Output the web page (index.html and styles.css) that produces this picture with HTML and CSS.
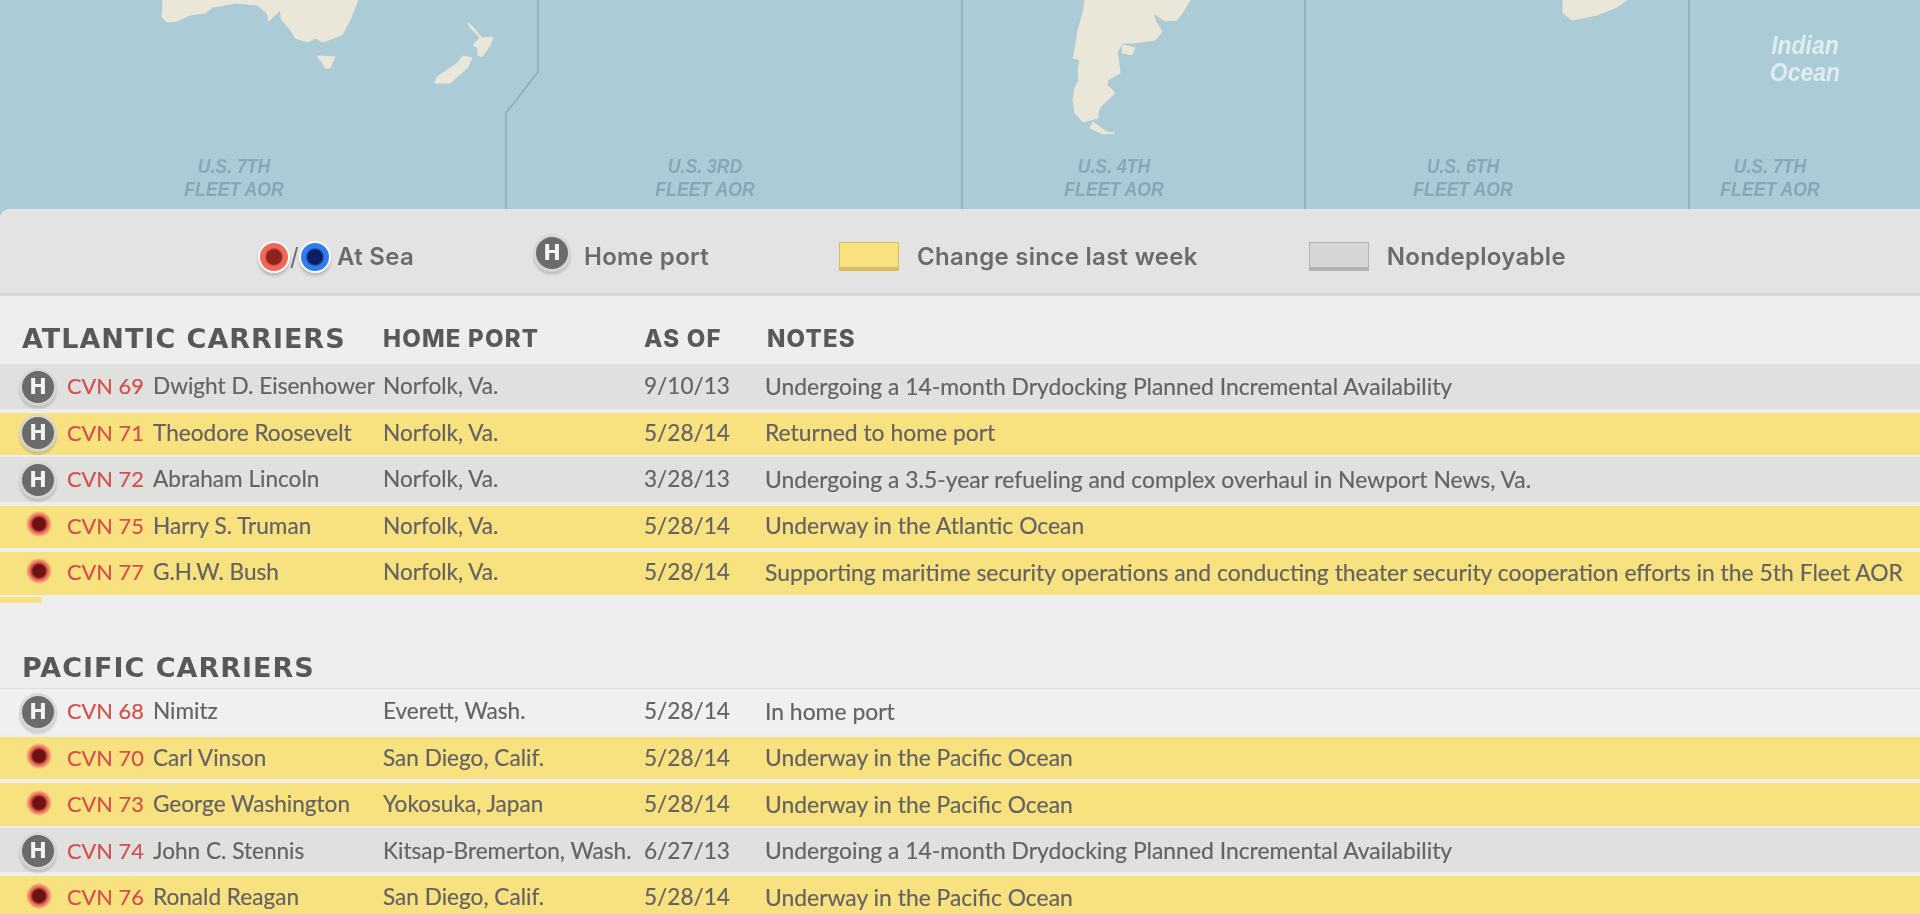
FILE: index.html
```html
<!DOCTYPE html>
<html lang="en">
<head>
    <meta charset="UTF-8">
    <meta name="viewport" content="width=device-width, initial-scale=1.0">
    <title>U.S. Navy Carrier Tracker</title>
    <link rel="stylesheet" href="styles.css">
</head>
<body>
<div class="page">
    <div class="top">
        <section class="map">
            <svg class="map-art" viewBox="0 0 1920 209" width="1920" height="209">
                <g class="land">
                    <path d="M163 0 162 17 167 22 177 21 190 15 205 13 213 7 237 3 257 5 267 13 269 21 280 10 282 20 292 32 295 38 308 42 315 38 323 42 342 35 350 20 358 0Z"/>
                    <path d="M317 56 335 57 330 68 325 68 322 62Z"/>
                    <path d="M468 23 473 27 482 38 493 37 490 45 482 57 478 55 478 48 473 45 480 38 470 27Z"/>
                    <path d="M463 56 472 58 468 67 450 83 435 83 437 77 455 65Z"/>
                    <path d="M1085 0 1083 13 1078 30 1075 50 1073 58 1080 60 1078 70 1079 80 1075 88 1073 100 1075 113 1083 122 1098 118 1098 112 1100 107 1115 93 1107 85 1108 80 1120 73 1118 57 1117 52 1123 43 1133 43 1155 40 1162 32 1155 20 1153 13 1165 21 1177 20 1183 12 1190 0Z"/>
                    <path d="M1123 45 1135 48 1132 55 1122 53Z"/>
                    <path d="M1093 122 1107 132 1115 133 1103 134 1090 128Z"/>
                    <path d="M1563 0 1563 13 1572 20 1597 15 1615 8 1627 0Z"/>
                </g>
                <g class="fleet-lines">
                    <path d="M538 0V72L506 113V209"/>
                    <path d="M962 0V209"/>
                    <path d="M1305 0V209"/>
                    <path d="M1689 0V209"/>
                </g>
            </svg>
            <div class="fleet fleet-a">U.S. 7TH<br>FLEET AOR</div>
            <div class="fleet fleet-b">U.S. 3RD<br>FLEET AOR</div>
            <div class="fleet fleet-c">U.S. 4TH<br>FLEET AOR</div>
            <div class="fleet fleet-d">U.S. 6TH<br>FLEET AOR</div>
            <div class="fleet fleet-e">U.S. 7TH<br>FLEET AOR</div>
            <div class="ocean">Indian<br>Ocean</div>
        </section>

        <section class="legend">
            <div class="legend-item sea-item">
                <span class="dot dot-red"></span><span class="slash">/</span><span class="dot dot-blue"></span>
                <span>At Sea</span>
            </div>
            <div class="legend-item home-item">
                <span class="home-icon">H</span>
                <span>Home port</span>
            </div>
            <div class="legend-item change-item">
                <span class="swatch swatch-yellow"></span>
                <span>Change since last week</span>
            </div>
            <div class="legend-item">
                <span class="swatch swatch-gray"></span>
                <span>Nondeployable</span>
            </div>
        </section>
    </div>

    <section class="carriers">
        <div class="head-row">
            <h2>ATLANTIC CARRIERS</h2>
            <div class="col-title">HOME PORT</div>
            <div class="col-title">AS OF</div>
            <div class="col-title notes-title">NOTES</div>
        </div>
        <div class="row gray">
            <div class="cell-icon"><span class="home-icon">H</span></div>
            <div class="hull">CVN 69</div><div class="ship">Dwight D. Eisenhower</div><div>Norfolk, Va.</div><div>9/10/13</div>
            <div class="note">Undergoing a 14-month Drydocking Planned Incremental Availability</div>
        </div>
        <div class="row yellow">
            <div class="cell-icon"><span class="home-icon">H</span></div>
            <div class="hull">CVN 71</div><div class="ship">Theodore Roosevelt</div><div>Norfolk, Va.</div><div>5/28/14</div>
            <div class="note">Returned to home port</div>
        </div>
        <div class="row gray">
            <div class="cell-icon"><span class="home-icon">H</span></div>
            <div class="hull">CVN 72</div><div class="ship">Abraham Lincoln</div><div>Norfolk, Va.</div><div>3/28/13</div>
            <div class="note">Undergoing a 3.5-year refueling and complex overhaul in Newport News, Va.</div>
        </div>
        <div class="row yellow">
            <div class="cell-icon"><span class="sea-icon"></span></div>
            <div class="hull">CVN 75</div><div class="ship">Harry S. Truman</div><div>Norfolk, Va.</div><div>5/28/14</div>
            <div class="note">Underway in the Atlantic Ocean</div>
        </div>
        <div class="row yellow">
            <div class="cell-icon"><span class="sea-icon"></span></div>
            <div class="hull">CVN 77</div><div class="ship">G.H.W. Bush</div><div>Norfolk, Va.</div><div>5/28/14</div>
            <div class="note">Supporting maritime security operations and conducting theater security cooperation efforts in the 5th Fleet AOR</div>
        </div>
        <div class="strip"></div>
    </section>

    <section class="carriers pacific">
        <div class="head-row">
            <h2>PACIFIC CARRIERS</h2>
        </div>
        <div class="row plain">
            <div class="cell-icon"><span class="home-icon">H</span></div>
            <div class="hull">CVN 68</div><div class="ship">Nimitz</div><div>Everett, Wash.</div><div>5/28/14</div>
            <div class="note">In home port</div>
        </div>
        <div class="row yellow">
            <div class="cell-icon"><span class="sea-icon"></span></div>
            <div class="hull">CVN 70</div><div class="ship">Carl Vinson</div><div>San Diego, Calif.</div><div>5/28/14</div>
            <div class="note">Underway in the Pacific Ocean</div>
        </div>
        <div class="row yellow">
            <div class="cell-icon"><span class="sea-icon"></span></div>
            <div class="hull">CVN 73</div><div class="ship">George Washington</div><div>Yokosuka, Japan</div><div>5/28/14</div>
            <div class="note">Underway in the Pacific Ocean</div>
        </div>
        <div class="row gray">
            <div class="cell-icon"><span class="home-icon">H</span></div>
            <div class="hull">CVN 74</div><div class="ship">John C. Stennis</div><div>Kitsap-Bremerton, Wash.</div><div>6/27/13</div>
            <div class="note">Undergoing a 14-month Drydocking Planned Incremental Availability</div>
        </div>
        <div class="row yellow">
            <div class="cell-icon"><span class="sea-icon"></span></div>
            <div class="hull">CVN 76</div><div class="ship">Ronald Reagan</div><div>San Diego, Calif.</div><div>5/28/14</div>
            <div class="note">Underway in the Pacific Ocean</div>
        </div>
    </section>
</div>
</body>
</html>
```

FILE: styles.css
```css
html, body {
    margin: 0;
    height: 914px;
    overflow: hidden;
    background: #eeeeee;
}
.page {
    width: 1920px;
    height: 914px;
    overflow: hidden;
    font-family: Lato, "Liberation Sans", sans-serif;
    color: #646464;
    filter: blur(0.55px);
}

/* map */
.top {
    background: #abcbd7;
}
.map {
    position: relative;
    height: 209px;
    overflow: hidden;
}
.map-art {
    display: block;
}
.land path {
    fill: #ebe7d8;
    stroke: #ebe7d8;
    stroke-width: 1;
    stroke-linejoin: round;
}
.fleet-lines path {
    fill: none;
    stroke: #79a6b6;
    stroke-width: 1.2;
}
.fleet, .ocean {
    position: absolute;
    width: 160px;
    margin-left: -80px;
    text-align: center;
    font-family: "Liberation Sans", sans-serif;
    font-style: italic;
    font-weight: 700;
}
.fleet {
    top: 154px;
    font-size: 21px;
    line-height: 23px;
    color: #84a8b6;
    transform: scaleX(0.84);
}
.fleet-a { left: 234px; }
.fleet-b { left: 705px; }
.fleet-c { left: 1114px; }
.fleet-d { left: 1463px; }
.fleet-e { left: 1770px; }
.ocean {
    top: 32px;
    left: 1805px;
    font-size: 25px;
    line-height: 27px;
    color: #dfecf0;
    transform: scaleX(0.92);
}

/* legend */
.legend {
    box-sizing: border-box;
    height: 87px;
    padding: 11px 0 0 258px;
    display: flex;
    align-items: center;
    background: #e3e3e3;
    border-bottom: 3px solid #d8d8d8;
    border-top-left-radius: 9px;
    font-family: Inter, sans-serif;
    font-size: 24px;
    letter-spacing: 0.3px;
    font-weight: 600;
    color: #6b6b6b;
}
.legend-item {
    display: flex;
    align-items: center;
}
.sea-item { margin-right: 119px; }
.home-item { margin-right: 130px; }
.change-item { margin-right: 111px; }
.dot {
    box-sizing: border-box;
    width: 32px;
    height: 32px;
    border: 2.5px solid #fbfbfb;
    border-radius: 50%;
    box-shadow: 0 3px 3px rgba(0, 0, 0, 0.18);
}
.dot-red {
    background: radial-gradient(circle, #8d231c 0 7px, #f0685a 9.5px);
}
.dot-blue {
    background: radial-gradient(circle, #0d1c63 0 7px, #2f7df0 9.5px);
    margin-right: 6px;
}
.slash {
    width: 9px;
    text-align: center;
    font-weight: 400;
}
.swatch {
    box-sizing: border-box;
    width: 60px;
    height: 29px;
    margin-right: 18px;
    border-style: solid;
    border-width: 1px 1px 4px;
}
.swatch-yellow {
    background: #f8e17f;
    border-color: #d5be62;
}
.swatch-gray {
    background: #d6d6d6;
    border-color: #b3b3b3;
}
.home-icon {
    display: block;
    width: 32px;
    height: 32px;
    line-height: 32px;
    border-radius: 50%;
    background: #6b6b6b;
    color: #f4f4f4;
    text-align: center;
    font-family: "DejaVu Sans", sans-serif;
    font-size: 21px;
    font-weight: 700;
    letter-spacing: 0;
    -webkit-text-stroke: 0;
    box-shadow: 0 0 0 3px rgba(215, 215, 215, 0.85), 0 3px 2px 3px rgba(0, 0, 0, 0.14);
}
.home-item .home-icon {
    margin-right: 16px;
    margin-left: 3px;
    position: relative;
    top: -4px;
}

/* tables */
.head-row, .row {
    display: grid;
    grid-template-columns: 67px 86px 230px 261px 121px 1fr;
    align-items: center;
}
.head-row {
    height: 68px;
    padding-top: 17px;
    box-sizing: border-box;
}
.head-row h2 {
    grid-column: 1 / 4;
    margin: 0 0 0 22px;
    font-family: "DejaVu Sans", sans-serif;
    font-size: 27px;
    letter-spacing: 1px;
    font-weight: 700;
    color: #585858;
}
.col-title {
    font-family: Inter, sans-serif;
    font-size: 24px;
    font-weight: 800;
    letter-spacing: 1.2px;
    color: #595959;
}
.notes-title {
    padding-left: 2px;
}
.row {
    box-sizing: border-box;
    height: 46.5px;
    font-size: 22.6px;
    -webkit-text-stroke: 0.2px #646464;
    border-top: 2px solid transparent;
    border-bottom: 2px solid transparent;
    background-clip: padding-box;
}
.gray {
    background-color: #e0e0de;
    border-top-width: 0;
    padding-bottom: 1.5px;
}
.yellow {
    background-color: #f8e17f;
    padding-bottom: 3.5px;
}
.plain {
    background-color: #f0f0f0;
    border-top: 1px solid #e0e0e0;
    padding-bottom: 2.5px;
}
.note {
    font-size: 22.9px;
}
.cell-icon {
    display: flex;
    justify-content: center;
}
.cell-icon .home-icon {
    position: relative;
    top: 1px;
    margin-left: 9px;
}
.sea-icon {
    display: block;
    width: 26px;
    height: 26px;
    border-radius: 50%;
    background: radial-gradient(circle, #6c1212 0 6px, #ee685e 9px, rgba(238, 104, 94, 0.6) 11px, rgba(238, 104, 94, 0) 13px);
    position: relative;
    top: -1px;
    margin-left: 11px;
}
.hull {
    font-size: 21.8px;
    color: #d2504b;
    -webkit-text-stroke-color: #d2504b;
}
.strip {
    width: 42px;
    height: 6px;
    background: #f8e17f;
    margin-bottom: -6px;
}
.pacific .head-row {
    height: 91.5px;
    padding-top: 51px;
}
.pacific .row {
    padding-top: 2px;
}
```
